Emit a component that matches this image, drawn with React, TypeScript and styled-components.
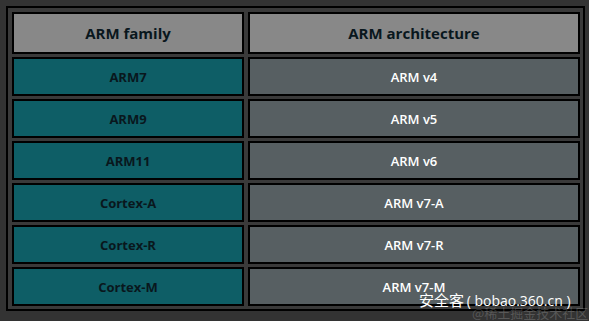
import styled, { createGlobalStyle } from "styled-components";

const GlobalStyle = createGlobalStyle`
    html, body {
        margin: 0;
        padding: 0;
        background-color: #333333;
    }
`;

const Page = styled.div`
    position: relative;
    width: 589px;
    height: 321px;
    padding: 6px;
    box-sizing: border-box;
    background-color: #333333;
    overflow: hidden;
`;

const Table = styled.div`
    display: grid;
    grid-template-columns: 232px 332px;
    grid-template-rows: 42px repeat(6, 39px);
    column-gap: 4px;
    row-gap: 3px;
    padding: 4px 3px 3px 4px;
    width: max-content;
    border: 2px solid #000;
    background-color: #3a3a3a;
`;

type CellKind = "head" | "family" | "arch";

const Cell = styled.div<{ $kind: CellKind }>`
    display: flex;
    align-items: center;
    justify-content: center;
    border: 2px solid #000;
    font-family: "Open Sans", "Noto Sans", sans-serif;
    font-size: ${(p) => (p.$kind === "head" ? "15px" : "13px")};
    font-weight: ${(p) => (p.$kind === "arch" ? 600 : 700)};
    color: ${(p) => (p.$kind === "arch" ? "#ffffff" : "#09171d")};
    background-color: ${(p) =>
        p.$kind === "head" ? "#888888" : p.$kind === "family" ? "#0e5e66" : "#575f62"};
`;

const Watermark = styled.div`
    position: absolute;
    left: 419px;
    top: 290px;
    font-family: "Noto Sans CJK SC", sans-serif;
    font-size: 15px;
    line-height: 20px;
    color: #ffffff;
    white-space: nowrap;
`;

const Latin = styled.span`
    font-family: "Open Sans", sans-serif;
    font-size: 14px;
    margin-left: -1px;
`;

const WatermarkFaint = styled.div`
    position: absolute;
    left: 472px;
    top: 303px;
    font-family: "Noto Sans CJK SC", sans-serif;
    font-size: 13px;
    color: rgba(200, 200, 200, 0.25);
    white-space: nowrap;
`;

const rows = [
    ["ARM7", "ARM v4"],
    ["ARM9", "ARM v5"],
    ["ARM11", "ARM v6"],
    ["Cortex-A", "ARM v7-A"],
    ["Cortex-R", "ARM v7-R"],
    ["Cortex-M", "ARM v7-M"],
];

export default function App() {
    return (
        <>
            <GlobalStyle />
            <Page>
                <Table>
                    <Cell $kind="head">ARM family</Cell>
                    <Cell $kind="head">ARM architecture</Cell>
                    {rows.flatMap(([family, arch]) => [
                        <Cell key={family} $kind="family">{family}</Cell>,
                        <Cell key={arch} $kind="arch">{arch}</Cell>,
                    ])}
                </Table>
                <WatermarkFaint>@稀土掘金技术社区</WatermarkFaint>
                <Watermark>
                    安全客<Latin> ( bobao.360.cn )</Latin>
                </Watermark>
            </Page>
        </>
    );
}
